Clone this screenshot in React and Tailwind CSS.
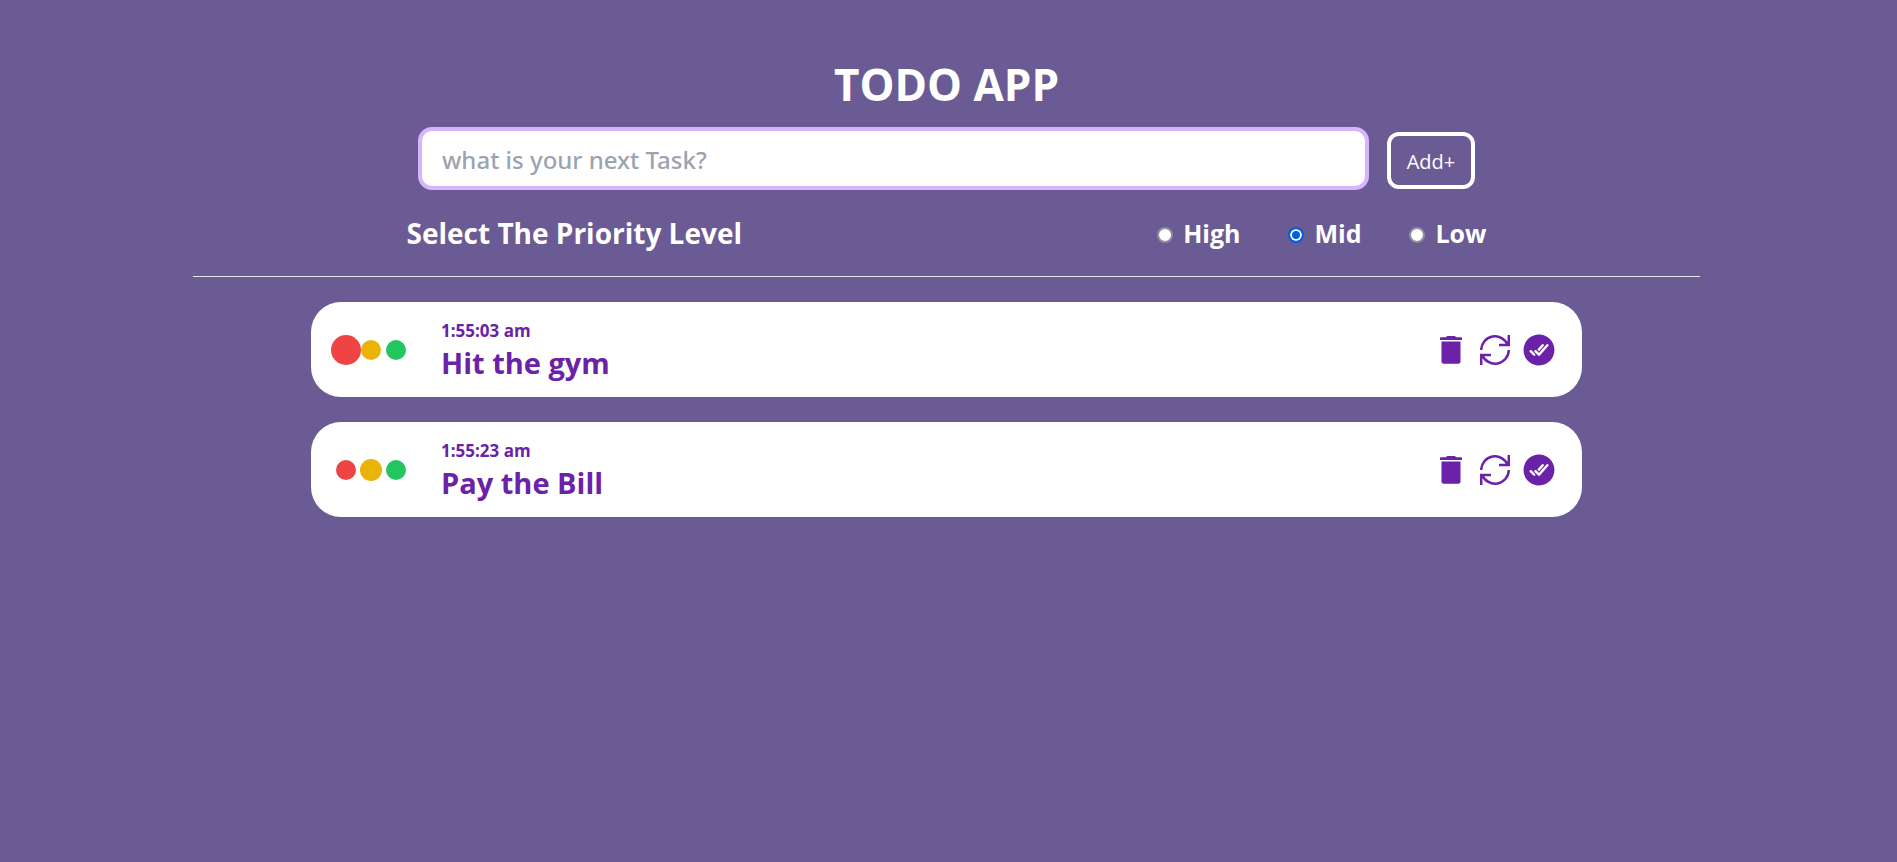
import { IoCheckmarkDoneCircle } from "react-icons/io5";

const tasks = [
  { id: 1, time: "1:55:03 am", title: "Hit the gym", priority: "High" },
  { id: 2, time: "1:55:23 am", title: "Pay the Bill", priority: "Mid" },
];

const lights = [
  { level: "High", color: "bg-[#ef4444]", active: "size-[30px]" },
  { level: "Mid", color: "bg-[#eab308]", active: "size-[22px]" },
  { level: "Low", color: "bg-[#22c55e]", active: "size-[22px]" },
];

function TrashIcon() {
  return (
    <svg viewBox="0 0 24 30" className="h-[30px] w-6" fill="currentColor" aria-hidden="true">
      <path d="M1 3q0-.8.8-.8h5l.8-.8q.3-.4.8-.4h7.200q.5 0 .8.4l.8.8h5q.8 0 .8.8v2H1z" />
      <path d="M2.500 6.500h19v20q0 2.200-2.200 2.200H4.700q-2.200 0-2.200-2.200z" />
    </svg>
  );
}

function UpdateIcon() {
  return (
    <svg viewBox="0 0 30 30" className="size-[30px]" fill="none" stroke="currentColor" strokeWidth="2.5" aria-hidden="true">
      <path d="M1.200 15A13.800 13.800 0 0 1 27.800 10M19 10h9.800V0M28.800 15A13.800 13.800 0 0 1 2.200 20M11 20H1.200v10" />
    </svg>
  );
}

function Task({ task }) {
  return (
    <li className="flex h-[95px] items-center rounded-[30px] bg-white pr-6 pl-[22px] text-[#6b21a8]">
      <div className="flex">
        {lights.map((l) => (
          <span key={l.level} className="flex h-8 w-[25px] items-center justify-center">
            <span
              className={`shrink-0 rounded-full ${l.color} ${l.level === task.priority ? l.active : "size-5"}`}
            />
          </span>
        ))}
      </div>
      <div className="ml-[33px] flex-1 pt-0.5 font-bold">
        <p className="text-[17px] leading-6">{task.time}</p>
        <h2 className="text-[29px] leading-10">{task.title}</h2>
      </div>
      <div className="flex items-center">
        <button type="button" aria-label="Delete task">
          <TrashIcon />
        </button>
        <button type="button" aria-label="Update task" className="ml-[17px]">
          <UpdateIcon />
        </button>
        <button type="button" aria-label="Complete task" className="ml-[10px]">
          <IoCheckmarkDoneCircle className="size-[38px]" />
        </button>
      </div>
    </li>
  );
}

export default function App() {
  return (
    <main className="min-h-screen bg-[#6b5b95] pt-[60px] pr-1 font-['Open_Sans','Noto_Sans',sans-serif] text-white">
      <h1 className="text-center text-[44px] leading-[48px] font-bold">TODO APP</h1>
      <form className="mx-auto max-w-[1507px]" onSubmit={(e) => e.preventDefault()}>
        <div className="mx-auto mt-[19px] flex max-w-[1057px] items-center gap-[18px]">
          <input
            type="text"
            aria-label="Task"
            placeholder="what is your next Task?"
            className="h-[63px] min-w-0 flex-1 rounded-[14px] border-4 border-[#d8b4fe] bg-white px-5 pt-0.5 font-['Noto_Sans',sans-serif] text-[24px] font-medium text-gray-800 outline-none placeholder:text-[#9ca3af]"
          />
          <button
            type="submit"
            className="mt-1 h-[57px] w-[88px] rounded-xl border-4 border-white pt-0.5 text-[20px]"
          >
            Add+
          </button>
        </div>
        <div
          role="radiogroup"
          aria-labelledby="priority-label"
          className="mx-auto mt-[23px] flex max-w-[1080px] items-center justify-between font-bold"
        >
          <span id="priority-label" className="text-[28px] leading-10">
            Select The Priority Level
          </span>
          <div className="flex gap-12 text-[25px] leading-10">
            {["High", "Mid", "Low"].map((level) => (
              <label key={level} className="flex items-center gap-[10px]">
                <input
                  type="radio"
                  name="priority"
                  value={level}
                  defaultChecked={level === "Mid"}
                  className="mt-1 size-4 appearance-none rounded-full border-2 border-[#8f8f9d] bg-white checked:border-[#0060df] checked:bg-[#0060df] checked:shadow-[inset_0_0_0_2px_#fff]"
                />
                {level}
              </label>
            ))}
          </div>
        </div>
      </form>
      <hr className="mx-auto mt-[23px] max-w-[1507px] border-[#e5e7eb]" />
      <ul className="mx-auto mt-[25px] flex max-w-[1271px] flex-col gap-[25px]">
        {tasks.map((task) => (
          <Task key={task.id} task={task} />
        ))}
      </ul>
    </main>
  );
}
